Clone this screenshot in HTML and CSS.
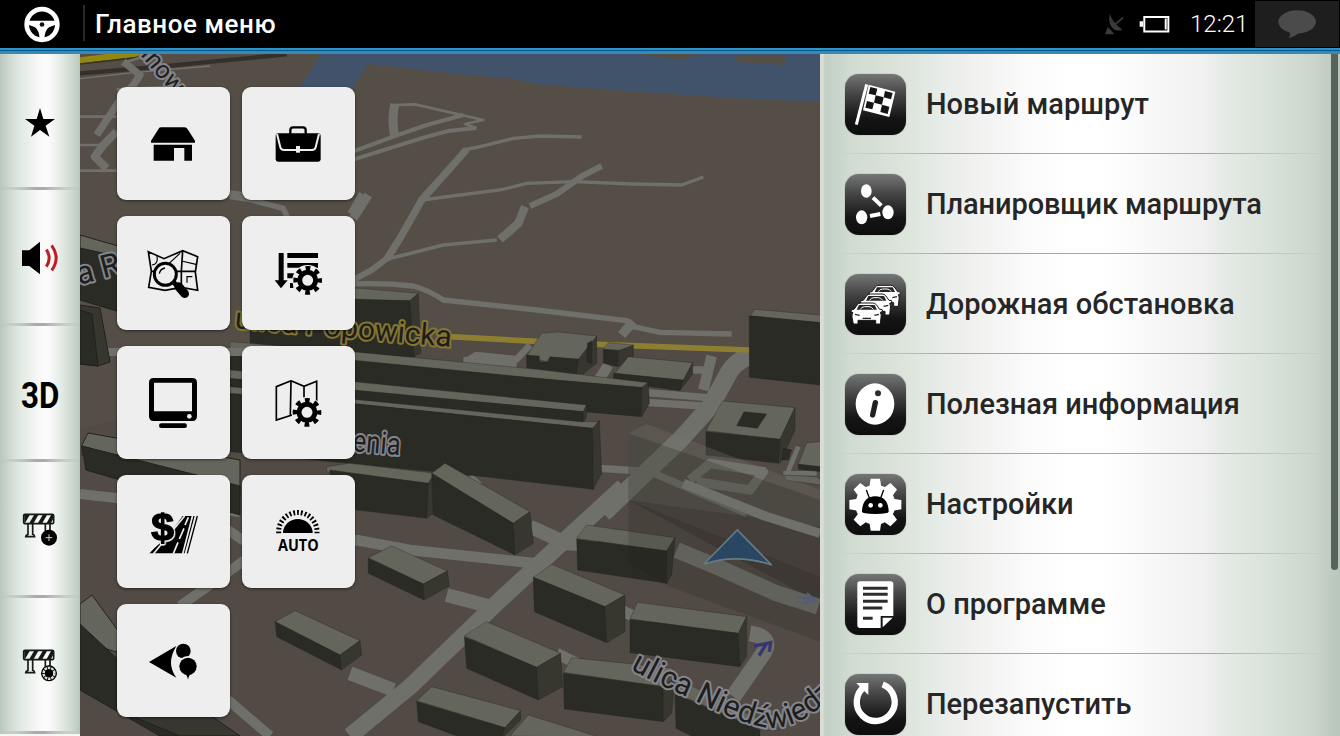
FILE: index.html
```html
<!DOCTYPE html>
<html lang="ru">
<head>
<meta charset="utf-8">
<title>Главное меню</title>
<link rel="stylesheet" href="styles.css">
</head>
<body>
<header class="topbar">
  <div class="brand">
    <svg class="wheel" viewBox="72 16 108 110">
      <circle cx="126" cy="71" r="46" fill="none" stroke="#fff" stroke-width="14"/>
      <path fill="#fff" d="M84 60H168L169 71L147 79Q135 87 133 114H119Q117 87 105 79L83 71Z"/>
      <circle cx="126" cy="71" r="7" fill="#111"/>
    </svg>
  </div>
  <h1 class="title">Главное меню</h1>
  <div class="status">
    <svg class="gps" viewBox="76 40 60 66">
      <path fill="#3a3a3a" d="M91 42Q96 66 128 90Q108 98 96 82Q84 66 91 42ZM76 104L84 82Q96 92 104 104Z"/>
      <path stroke="#3a3a3a" stroke-width="5" fill="none" d="M104 76L130 54"/>
    </svg>
    <svg class="battery" viewBox="178 44 94 54">
      <path fill="none" stroke="#fff" stroke-width="6" d="M194 50H267V94H194Z"/>
      <path fill="#fff" d="M180 63h10v16h-10ZM256 54h6v34h-6Z"/>
    </svg>
    <span class="clock">12:21</span>
    <div class="chat">
      <svg class="bubble" viewBox="594 28 116 88">
        <ellipse cx="651" cy="64" rx="57" ry="35" fill="#4b4b4b"/>
        <path fill="#4b4b4b" d="M626 92Q634 104 624 114Q646 108 662 94Z"/>
      </svg>
    </div>
  </div>
</header>

<main class="screen">
  <nav class="side">
    <button class="side-btn"><svg class="side-icon" viewBox="0 162 240 408">
      <path d="M120 324L130 357H165L137 377L148 410L120 390L93 410L103 377L75 357H110Z"/></svg></button>
    <button class="side-btn"><svg class="side-icon" viewBox="0 30 240 408">
      <path d="M66 211H88L120 185V283L88 258H66Z"/>
      <path fill="none" stroke="#b91f24" stroke-width="9" d="M139 209Q156 234 139 260M155 196Q182 234 155 271"/></svg></button>
    <button class="side-btn"><svg class="side-icon" viewBox="0 438 240 408">
      <text class="three-d" x="63" y="683" textLength="115" lengthAdjust="spacingAndGlyphs">3D</text></svg></button>
    <button class="side-btn"><svg class="side-icon" viewBox="0 -84 240 408">
      <g id="barrier">
        <path fill="none" stroke="#161a17" stroke-width="5" d="M71 77Q71 73 75 73H157Q161 73 161 77V97Q161 101 157 101H75Q71 101 71 97ZM84 101V133Q77 135 77 140H104Q104 135 98 133V101M136 101V124M150 101V124"/>
        <path fill="#161a17" d="M73 75H89L75 99H73ZM102 75H115L101 99H88ZM128 75H141L127 99H114ZM153 75H159V88L153 99H140Z"/>
      </g>
      <circle cx="147" cy="143" r="24"/>
      <path stroke="#cfd8cf" stroke-width="3" d="M137 143H157M147 133V153"/></svg></button>
    <button class="side-btn"><svg class="side-icon" viewBox="0 324 240 408">
      <use href="#barrier" y="408"/>
      <circle cx="147" cy="550" r="24"/>
      <circle cx="147" cy="550" r="16" fill="none" stroke="#d5ddd5" stroke-width="8" pathLength="20" stroke-dasharray="1.5 .5"/>
      <circle cx="147" cy="550" r="12"/></svg></button>
  </nav>

  <section class="map">
    <svg class="map-canvas" viewBox="80 54 740 682">
      <rect x="80" y="54" width="740" height="682" fill="#544e47"/>
      <path class="water" d="M322 54H820V102L733 98L640 92L535 84L515 79L450 73L368 64L358 80L352 90H298Z"/>
      <path fill="#544e47" d="M735 56H785V65L735 62ZM640 54H700L680 60Z"/>
      <path class="ground-low" d="M80 430L420 330L820 360V736H80Z"/>

      <!-- north-west streets -->
      <g transform="scale(.33333)">
        <path stroke="#33302a" stroke-width="13" fill="none" d="M240 220L480 200L860 163"/>
        <path stroke="#77736b" stroke-width="4" fill="none" d="M240 236L400 218L630 198"/>
        <path fill="#94870f" d="M240 172L320 162H430L400 172L240 190Z"/>
        <path stroke="#353529" stroke-width="5" d="M240 192L410 173"/>
        <g class="road">
          <path stroke-width="22" d="M370 185L420 225L400 255L360 300L330 345L290 405"/>
          <path stroke-width="24" d="M350 395L310 435L284 470L320 505"/>
          <path stroke-width="8" d="M240 350H350M240 435H300M240 512H350M600 560L760 585"/>
          <path stroke-width="16" d="M600 560L850 625L870 670M690 590L760 600M1085 580L1050 640"/>
          <path stroke-width="8" d="M350 268L540 258M430 170L380 185"/>
        </g>
      </g>
      <g class="road" transform="translate(350 50) scale(.33333)">
        <path stroke-width="27" d="M134 162Q124 210 134 260"/>
        <path stroke-width="8" d="M134 165L195 163L400 210L345 222L380 235"/>
        <path stroke-width="12" d="M0 308L130 260L230 225L340 195M0 332L230 260L300 242L378 234"/>
        <path stroke-width="10" d="M340 300L390 290L490 265L570 258L695 261M215 450L460 418L530 400L670 395L850 402L995 405L1060 381"/>
        <path stroke-width="22" d="M350 298L300 355L215 450L150 565L110 628"/>
        <path stroke-width="18" d="M115 622L65 660L0 695M755 348L700 376L620 432L540 468"/>
        <path stroke-width="11" d="M110 628L280 585L440 570"/>
        <path stroke-width="25" d="M525 470L505 520L450 568"/>
        <path stroke-width="26" d="M55 435L10 505"/>
      </g>

      <!-- central district -->
      <g transform="translate(350 270) scale(.33333)">
        <g class="road">
          <path stroke-width="16" d="M0 42Q100 38 190 48Q240 62 280 90L560 120L830 152L850 170L930 187L1145 192"/>
          <path stroke-width="28" d="M850 155L815 195"/>
          <path stroke-width="20" d="M345 275L380 255L500 268L540 225M340 270L500 285"/>
          <path stroke-width="32" d="M775 285L740 340M1085 258L1060 360"/>
          <path stroke-width="22" d="M890 368L1100 385M890 397L1060 408M1020 300H1060M750 595L900 605L1190 730"/>
          <path stroke-width="54" d="M1200 258Q1150 275 1130 320L1080 410L990 510L890 605L760 730"/>
          <path stroke-width="38" d="M380 625L340 670"/>
          <path stroke-width="28" d="M1020 630L1080 580L1240 605L1200 660L1040 635"/>
          <path stroke-width="14" d="M1300 610H1400M1310 615L1345 530"/>
        </g>
        <path fill="none" stroke="#8c7f31" stroke-width="17" d="M300 200L560 214L760 224L1200 240"/>
        <g class="building">
          <path class="roof" d="M-300 45L30 55L205 70L180 92H-300Z"/>
          <path class="front" d="M-300 78L180 92L195 260H-300Z"/>
          <path class="flank" d="M180 92L205 70L212 250L192 258Z"/>
          <path class="roof" d="M530 258L575 190L625 186L740 198L725 250L690 268L600 262L590 275Z"/>
          <path class="front" d="M530 255L568 258V276H595L600 260L685 268L680 315L530 295Z"/>
          <path class="flank" d="M685 268L740 198V280L700 312H680Z"/>
          <path class="front" d="M712 220L725 212V280L710 275Z"/>
          <path class="roof" d="M760 238L775 218L850 225L835 242Z"/>
          <path class="front" d="M760 238L805 242V290L760 280Z"/>
          <path class="flank" d="M805 242L850 225V265L808 288Z"/>
          <path class="roof" d="M795 310L835 260L1028 278L1000 332Z"/>
          <path class="front" d="M790 310L1000 330L990 362L790 335Z"/>
          <path class="flank" d="M1000 330L1028 278V312L990 362Z"/>
          <path class="roof" d="M1200 138L1215 118L1412 135V158Z"/>
          <path class="front" d="M1198 137L1412 158V345L1198 322Z"/>
          <path class="roof" d="M-360 215L40 248L560 298L895 338L875 355L560 325L-360 235Z"/>
          <path class="front" d="M-360 235L560 325L875 352V440L700 425L-360 380Z"/>
          <path class="flank" d="M875 352L895 338L898 400L875 440Z"/>
          <path class="roof" d="M-360 300L30 337L710 405L700 425L-360 330Z"/>
          <path class="front" d="M-360 325L700 425V460L-360 380Z"/>
          <path class="flank" d="M700 425L710 405V440L700 460Z"/>
          <path class="roof" d="M-360 350L0 387L690 455H748L728 475L0 400L-360 375Z"/>
          <path class="front" d="M-360 370L0 400L728 475L730 658L420 622L-360 545Z"/>
          <path class="flank" d="M728 475L748 450L755 610L730 658Z"/>
          <path class="roof" d="M1068 482L1118 393L1335 413L1290 508Z"/>
          <path class="front" d="M1068 485L1290 508L1287 580L1068 555Z"/>
          <path class="flank" d="M1290 508L1335 413V480L1290 580Z"/>
          <path class="front" d="M1160 467L1182 425L1250 432L1222 475Z"/>
          <path class="roof" d="M1345 583L1370 518L1412 515V592ZM1300 615L1400 620L1412 630V645L1310 630Z"/>
          <path class="front" d="M1345 583L1412 590V605L1345 598ZM1300 535L1325 540L1315 570H1295Z"/>
          <path class="roof" d="M-70 590L0 580L255 610L235 640L-70 605Z"/>
          <path class="front" d="M-60 600L235 640L230 745L-60 710Z"/>
          <path class="flank" d="M235 640L255 610L250 730L230 745Z"/>
        </g>
        <path fill="#73786b" opacity=".3" d="M835 490L890 462L1412 660V770L835 690Z"/>
        <path fill="#15150f" opacity=".2" d="M835 490L1412 690V1000L835 690Z"/>
      </g>

      <!-- southern blocks -->
      <g transform="translate(350 490) scale(.33333)">
        <g class="road">
          <path stroke-width="32" d="M-115 135L30 152L180 180L555 220"/>
          <path stroke-width="50" d="M820 -10L640 155L450 330L180 590L0 738"/>
          <path stroke-width="42" d="M540 110L650 160L740 165M290 315L440 355M0 550L130 600"/>
          <path stroke-width="28" d="M1410 130L1250 80L1000 -20"/>
          <path stroke-width="48" d="M980 180L1100 230L1280 310L1405 350M1200 430Q1270 440 1240 490L1150 620"/>
          <path stroke-width="34" d="M810 360L900 400M620 490L680 520"/>
        </g>
        <g class="building">
          <path class="roof" d="M245 -50L285 -80L540 65L490 100Z"/>
          <path class="front" d="M245 -50L490 100L495 195L250 75Z"/>
          <path class="flank" d="M490 100L540 65L550 160L495 195Z"/>
          <path class="roof" d="M55 203L125 168L292 243L220 282Z"/>
          <path class="front" d="M55 205L220 282L222 330L55 250Z"/>
          <path class="flank" d="M220 282L292 243L298 288L222 330Z"/>
          <path class="roof" d="M-225 395L-165 362L30 452L-30 495Z"/>
          <path class="front" d="M-225 395L-30 495L-25 540L-220 440Z"/>
          <path class="flank" d="M-30 495L30 452L35 495L-25 540Z"/>
          <path class="roof" d="M680 145L710 105L975 143L950 183Z"/>
          <path class="front" d="M680 147L950 183V280L683 240Z"/>
          <path class="flank" d="M950 183L975 143L965 255L950 280Z"/>
          <path class="roof" d="M550 262L605 223L825 315L765 350Z"/>
          <path class="front" d="M550 262L765 350L770 458L553 365Z"/>
          <path class="flank" d="M765 350L825 315V425L770 458Z"/>
          <path class="roof" d="M840 387L862 337L1190 380L1165 430Z"/>
          <path class="front" d="M840 388L1165 430L1170 530L840 488Z"/>
          <path class="flank" d="M1165 430L1190 380V498L1170 530Z"/>
          <path class="roof" d="M343 437L410 395L632 490L560 532Z"/>
          <path class="front" d="M343 440L560 532L565 630L350 535Z"/>
          <path class="flank" d="M560 532L632 490L638 590L565 630Z"/>
          <path class="roof" d="M640 547L665 503L970 535L940 590Z"/>
          <path class="front" d="M640 550L940 590V695L643 657Z"/>
          <path class="flank" d="M940 590L975 560L965 670L940 695Z"/>
          <path class="roof" d="M975 610L1010 580L1290 720H1240Z"/>
          <path class="front" d="M975 613L1230 720V760H1070L978 715Z"/>
          <path class="roof" d="M200 632L245 590L512 662L465 713Z"/>
          <path class="front" d="M200 635L465 713L455 745H340L205 695Z"/>
          <path class="flank" d="M465 713L512 662V690L455 745Z"/>
          <path class="roof" d="M480 738L535 675L750 742Z"/>
        </g>
        <path fill="#171610" opacity=".16" d="M835 30L1410 260V455L960 290L835 220Z"/>
        <path fill="#294663" stroke="#687a83" stroke-width="5" d="M1062 222L1162 120L1265 225Q1160 190 1062 222Z"/>
        <path fill="none" stroke="#34386f" stroke-width="10" d="M1227 497L1250 460M1212 468L1262 458L1258 485"/>
        <path fill="none" stroke="#555d76" stroke-width="8" d="M1340 320L1395 332M1370 310L1398 332L1355 340"/>
      </g>

      <!-- western blocks -->
      <g class="road">
        <path stroke-width="10" d="M80 494L240 512M180 606L245 560M228 530L244 541M228 700L270 736"/>
        <path stroke-width="8" d="M105 352H120M228 352H244"/>
      </g>
      <g class="building">
        <path class="front" d="M80 240L120 252V312L80 300Z"/>
        <path class="roof" d="M80 235L125 248V258L80 248Z"/>
        <path class="flank" d="M80 305L100 308L110 362L98 366L80 364Z"/>
        <path class="front" d="M80 310L92 314L98 366L80 364Z"/>
        <path class="roof" d="M82 445L88 433L240 460V495L82 455Z"/>
        <path class="front" d="M82 446L240 486V515L86 470Z"/>
        <path class="roof" d="M80 604L92 595Q110 620 140 660L80 640Z"/>
        <path class="front" d="M80 624L140 680L210 736H160L80 690Z"/>
        <path class="flank" d="M117 650L240 736H180L117 710Z"/>
      </g>

      <g class="street-name">
        <text font-size="25" transform="translate(140 55) rotate(50)">inowa</text>
        <text font-size="32" transform="translate(79 285) rotate(-15)">a R</text>
        <text class="major" font-size="30" text-anchor="end" transform="translate(451 347) rotate(5)">ulica Popowicka</text>
        <text font-size="31" transform="translate(352 451) rotate(5)" textLength="48" lengthAdjust="spacingAndGlyphs">enia</text>
        <path id="lane" fill="none" stroke="none" d="M630 669Q660 686 692 699Q735 722 768 728Q806 730 848 680"/>
        <text font-size="31" textLength="228" lengthAdjust="spacingAndGlyphs"><textPath href="#lane">ulica Niedźwiedz</textPath></text>
      </g>
    </svg>

    <div class="tiles">
      <button class="tile"><svg viewBox="21 21 339 339">
        <path d="M153 142H223Q230 142 234 149L255 182V188H123V182L144 149Q147 142 153 142ZM131 194H246V242H223V204H192V242H131Z"/></svg></button>
      <button class="tile"><svg viewBox="396 21 339 339">
        <path fill="none" stroke="#000" stroke-width="7" d="M541 162V150Q541 142 549 142H579Q587 142 587 150V162"/>
        <path d="M504 160H624Q632 160 632 168V238Q632 245 625 245H504Q497 245 497 238V168Q497 160 504 160Z"/>
        <path fill="none" stroke="#eee" stroke-width="6" d="M501 162L511 202Q513 210 522 210H606Q615 210 617 202L627 162"/>
        <path fill="#eee" d="M558 198H570V218H558Z"/></svg></button>
      <button class="tile"><svg viewBox="21 408 339 339">
        <path fill="none" stroke="#000" stroke-width="5" d="M115 515L162 536L218 512L263 530L256 576L263 631L214 622L165 631L116 622L124 574L115 515ZM218 512L214 574L214 622M124 574H256"/>
        <path fill="none" stroke="#000" stroke-width="3.5" d="M215 543L258 553M126 555Q145 553 141 528M170 557L210 520M231 608V590H247"/>
        <circle cx="166" cy="583" r="33" fill="#eee" stroke="#000" stroke-width="9"/>
        <path fill="none" stroke="#000" stroke-width="4" d="M148 581Q150 567 165 564"/>
        <path stroke="#000" stroke-width="26" stroke-linecap="round" d="M206 620L224 641"/>
        <path stroke="#000" stroke-width="14" d="M190 606L206 622"/></svg></button>
      <button class="tile"><svg viewBox="396 408 339 339">
        <path d="M506 519H521V601H533L513 625L494 601H506ZM532 519H624V534H532ZM532 549H624V563H532ZM532 580H552V595H532ZM540 609H550V624H540Z"/>
        <g id="gear"><circle cx="593" cy="601" r="35" fill="#eee" stroke="#eee" stroke-width="22"/>
        <circle cx="593" cy="601" r="36" fill="none" stroke="#000" stroke-width="14" pathLength="16" stroke-dasharray="1 1" stroke-dashoffset=".5"/>
        <circle cx="593" cy="601" r="24" fill="none" stroke="#000" stroke-width="15"/></g></svg></button>
      <button class="tile"><svg viewBox="21 18 339 339">
        <path fill-rule="evenodd" d="M131 114H247Q261 114 261 128V229Q261 243 247 243H131Q117 243 117 229V128Q117 114 131 114ZM132 128V214H246V128Z"/>
        <circle cx="238" cy="229" r="7" fill="#eee"/><rect x="147" y="250" width="84" height="14" rx="7"/></svg></button>
      <button class="tile"><svg viewBox="396 18 339 339">
        <path fill="none" stroke="#000" stroke-width="5" d="M543 122L499 140V240L546 225M543 122L541 226M543 122L582 139L620 124V185M582 139V185"/>
        <use href="#gear" x="-2" y="-384"/></svg></button>
      <button class="tile"><svg viewBox="21 405 339 339">
        <path d="M218 528H254L224 640H115L175 588Z"/>
        <path stroke="#eee" stroke-width="5" fill="none" d="M248 526L218 642M224 528L130 642M211 530L115 640M235 532L225 555M222 565L208 597M204 607L190 641"/>
        <path stroke="#000" stroke-width="4" d="M262 528L232 640"/>
        <text class="dollar halo" x="124" y="601" textLength="68" lengthAdjust="spacingAndGlyphs" aria-hidden="true">$</text></svg></button>
      <button class="tile"><svg viewBox="396 405 339 339">
        <path d="M519 579V575A45 45 0 0 1 608 575V579Z"/>
        <path fill="none" stroke="#000" stroke-width="15" pathLength="41" stroke-dasharray="1.2 1.287" d="M506 580V575A57 57 0 0 1 621 575V580"/>
        <text class="auto" x="504" y="632" textLength="122" lengthAdjust="spacingAndGlyphs">AUTO</text></svg></button>
      <button class="tile"><svg viewBox="351 342 339 339">
        <path d="M447 516L529 468Q497 520 529 563Z"/>
        <circle cx="550" cy="483" r="22"/><circle cx="564" cy="529" r="31" fill="#eee"/>
        <circle cx="564" cy="529" r="26"/><path d="M551 548H577Q566 554 564 569Q562 554 551 548Z"/></svg></button>
    </div>
  </section>

  <nav class="menu">
    <a class="item"><span class="badge"><svg viewBox="74 70 183 183">
      <path stroke="#fff" stroke-width="9" d="M139 101L108 222"/>
      <path fill="#fff" d="M145 102L225 123L207 199L128 179Z"/>
      <path fill="#151515" d="M150 109L171 114L166 134L145 129ZM194 121L217 127L212 146L190 140ZM166 134L190 140L185 162L161 156ZM140 151L161 156L156 176L135 171ZM185 162L207 168L202 190L180 184Z"/></svg></span><span class="label">Новый маршрут</span></a>
    <a class="item"><span class="badge"><svg viewBox="74 370 183 183">
      <g fill="#fff"><ellipse cx="138" cy="421" rx="16" ry="20"/><ellipse cx="203" cy="485" rx="17" ry="21"/><ellipse cx="124" cy="500" rx="17" ry="21"/></g>
      <path stroke="#fff" stroke-width="12" d="M158 441L183 465M149 496L180 490"/></svg></span><span class="label long">Планировщик маршрута</span></a>
    <a class="item"><span class="badge"><svg viewBox="74 670 183 183">
      <defs><g id="car"><path fill="#fff" stroke="#161616" stroke-width="3" d="M92 783Q91 774 101 776L111 762Q114 757 122 757H157Q164 757 168 762L178 776Q188 774 187 782L180 785Q184 792 182 800L180 820H166V809H113V820H99L95 800Q94 790 98 786Z"/>
      <path fill="#262626" d="M116 763H163L170 777H109Z"/>
      <path fill="none" stroke="#fff" stroke-width="3" d="M120 776Q124 768 133 768H146Q154 768 159 776"/>
      <path fill="none" stroke="#262626" stroke-width="4" d="M104 791L118 794M162 794L176 791M127 803H152"/></g></defs>
      <use href="#car" x="54" y="-53"/>
      <use href="#car" x="28" y="-27"/>
      <use href="#car"/></svg></span><span class="label">Дорожная обстановка</span></a>
    <a class="item"><span class="badge"><svg viewBox="74 70 183 183">
      <ellipse cx="164" cy="160" rx="58" ry="62" fill="#fff"/>
      <circle cx="173" cy="128" r="9" fill="#2c2c2c"/>
      <path stroke="#202020" stroke-width="16" stroke-linecap="round" d="M165 156L157 193"/></svg></span><span class="label">Полезная информация</span></a>
    <a class="item"><span class="badge"><svg viewBox="74 370 183 183">
      <g fill="#fff">
        <circle cx="165" cy="462" r="60"/>
        <path id="teeth" d="M151 384H179L183 410V514L179 540H151L147 514V410Z"/>
        <use href="#teeth" transform="rotate(45 165 462)"/>
        <use href="#teeth" transform="rotate(90 165 462)"/>
        <use href="#teeth" transform="rotate(135 165 462)"/>
      </g>
      <path d="M125 483Q126 438 165 437Q204 438 205 483Q205 489 165 490Q125 489 125 483Z"/>
      <path stroke="#000" stroke-width="4" d="M138 418L147 442M190 418L181 442"/>
      <circle cx="151" cy="464" r="7" fill="#fff"/><circle cx="180" cy="464" r="7" fill="#fff"/></svg></span><span class="label">Настройки</span></a>
    <a class="item"><span class="badge"><svg viewBox="74 670 183 183">
      <path fill="#fff" d="M119 692H211Q219 692 219 700V796H181V832H119Q111 832 111 824V700Q111 692 119 692ZM187 801H217L187 830Z"/>
      <path stroke="#2c2c2c" stroke-width="9" d="M128 713H202M128 731H202M128 752H202M128 772H186M128 803H157"/></svg></span><span class="label">О программе</span></a>
    <a class="item"><span class="badge"><svg viewBox="74 970 183 183">
      <path fill="none" stroke="#fff" stroke-width="19" d="M187 1001A57 57 0 1 1 134 1007"/>
      <path fill="#fff" d="M108 997H144V1033L131 1020L119 1009Z"/></svg></span><span class="label">Перезапустить</span></a>
    <span class="scrollbar"></span>
  </nav>
</main>
</body>
</html>
```
FILE: styles.css
```css
* { box-sizing: border-box; }

body {
  margin: 0;
  width: 1340px;
  height: 736px;
  overflow: hidden;
  display: flex;
  flex-direction: column;
  font-family: Roboto, "Noto Sans", sans-serif;
  background: #000;
}

svg { display: block; }
button { border: 0; padding: 0; font: inherit; }

.topbar {
  height: 54px;
  flex: none;
  display: flex;
  padding-bottom: 6px;
  color: #fff;
  background:
    linear-gradient(#2f93c8 0 2px, #00598e 2px 3px, #3a88b4 3px 6px) bottom / 100% 6px no-repeat,
    #000;
}

.brand {
  width: 85px;
  display: flex;
  align-items: center;
  padding-left: 24px;
  background: linear-gradient(#292929, #292929) right 5px / 2px 36px no-repeat;
}

.wheel { width: 36px; height: 37px; }

.title {
  margin: 0;
  padding-left: 10px;
  font-size: 26px;
  font-weight: 500;
  line-height: 48px;
  letter-spacing: .55px;
}

.status {
  margin-left: auto;
  display: flex;
  align-items: center;
}

.gps { width: 20px; height: 22px; margin-right: 14px; }
.battery { width: 31px; height: 18px; margin-right: 20px; }
.clock { width: 65px; font-size: 24px; font-weight: 300; line-height: 48px; }

.chat {
  width: 84px;
  height: 46px;
  margin-right: 1px;
  padding: 9px 0 0 23px;
  background: #1e1e1e;
}

.bubble { width: 39px; height: 29px; }

.screen { flex: 1; min-height: 0; display: flex; }

.side {
  width: 80px;
  flex: none;
  display: flex;
  flex-direction: column;
  background: #f4f7f4;
}

.side-btn {
  height: 136px;
  flex: none;
  background:
    linear-gradient(90deg, transparent, #a9aaa9 45%, #a9aaa9 55%, transparent) bottom / 100% 3px no-repeat,
    linear-gradient(90deg, #b9c7bd 0, #d0dad2 10px, #e1e9e3 20px, #f3f5f3 35px, #fdfdfd 46px, #f4f5f4 53px, #dfe8e1 63px, #c3d0c6 77px, #b7c5ba 80px);
}

.side-icon { width: 80px; height: 100%; }
.three-d { font: 700 110px Roboto, sans-serif; }

.map { width: 740px; flex: none; position: relative; overflow: hidden; }
.map-canvas { position: absolute; inset: 0; width: 740px; height: 682px; }
.water { fill: #40536b; }
.ground-low { fill: #514a45; }
.road { fill: none; stroke: #70706b; stroke-linejoin: round; }
.building path { stroke: #22221d; stroke-width: 1; }
.building .roof { fill: #65665b; }
.building .front { fill: #2b2b25; }
.building .flank { fill: #37372f; }

.street-name {
  font-family: Roboto, sans-serif;
  font-weight: 400;
  fill: #1e1e1e;
  stroke: #85858a;
  stroke-width: 4px;
  stroke-linejoin: round;
  paint-order: stroke;
}

.street-name .major { stroke: #857632; }

.tiles {
  position: relative;
  display: grid;
  grid-template-columns: 113px 113px;
  grid-auto-rows: 113.3px;
  gap: 16px 12px;
  padding: 33px 0 0 37px;
}

.tile {
  border-radius: 9px;
  background: #eee;
  box-shadow: 0 1px 3px rgba(0, 0, 0, .5);
}

.tile svg { width: 113px; height: 113px; }
.dollar { font: 700 112px "Liberation Sans", sans-serif; stroke: #000; stroke-width: 4px; }
.halo { filter: drop-shadow(4px 2px 0 #eee) drop-shadow(-3px 3px 0 #eee); }
.auto { font: 700 46px "Open Sans", sans-serif; }

.menu {
  flex: 1;
  position: relative;
  overflow: hidden;
  background: linear-gradient(90deg, #d8ddd5 0, #d8ddd5 3px, #c2d0c5 5px, #d0dbd1 30px, #dee5dd 90px, #e8edea 125px, #f0f0ef 150px, #fafafa 205px, #fff 245px, #fff 285px, #f0f0f0 385px, #e5ebe6 402px, #d9e2da 450px, #cad5cb 495px, #b8c5ba 520px);
}

.item {
  height: 100px;
  display: flex;
  align-items: center;
  gap: 20.5px;
  padding-left: 24.5px;
  background: linear-gradient(90deg, transparent 12px, #a5a7a5 130px, #a5a7a5 390px, transparent 510px) bottom / 100% 1px no-repeat;
}

.badge {
  width: 61px;
  height: 61px;
  flex: none;
  border-radius: 14px;
  background: linear-gradient(#747675, #424242 35%, #151515 72%, #0d0d0d);
  box-shadow: 0 0 1px #555;
}

.badge svg { width: 61px; height: 61px; }
.label { font-size: 29px; font-weight: 500; color: #262626; white-space: nowrap; }
.label.long { letter-spacing: -.1px; }

.scrollbar {
  position: absolute;
  top: 0;
  right: 2px;
  width: 7px;
  height: 516px;
  border-radius: 0 0 4px 4px;
  background: #59625a;
}
```
